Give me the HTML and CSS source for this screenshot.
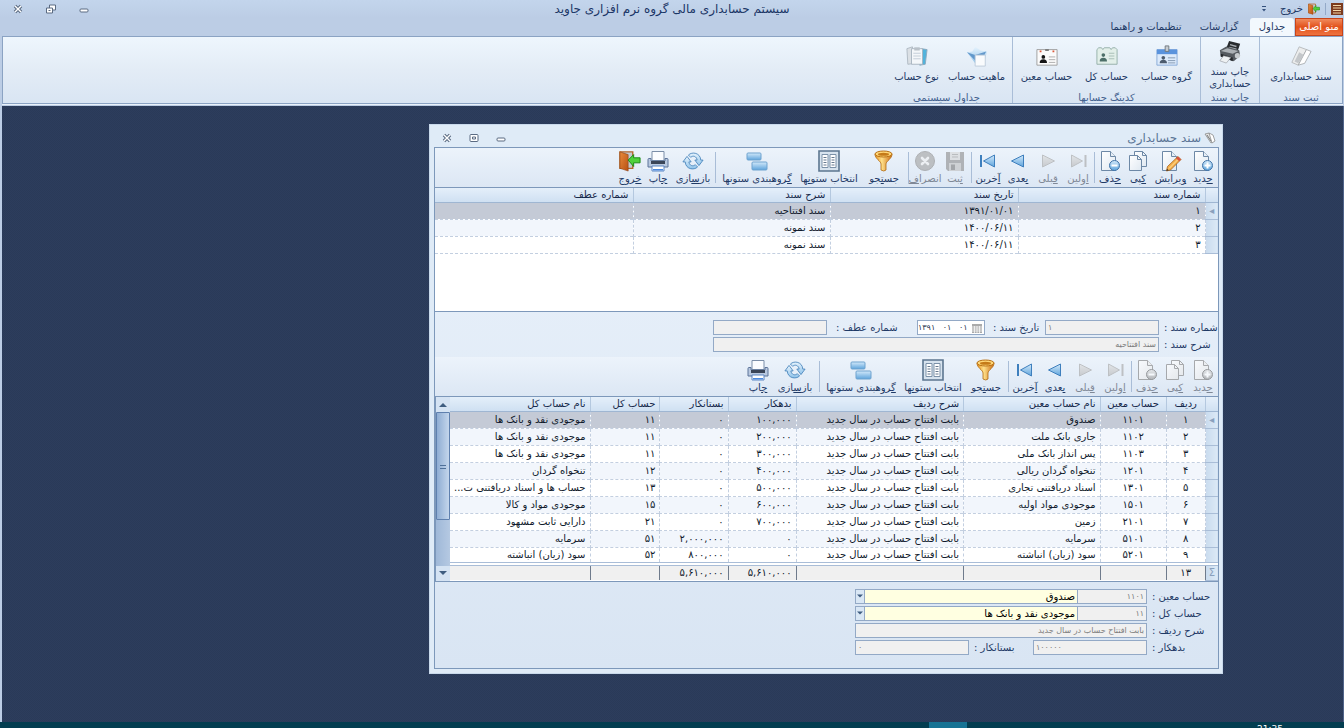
FILE: index.html
```html
<!DOCTYPE html>
<html lang="fa" dir="rtl">
<head>
<meta charset="utf-8">
<title>سیستم حسابداری مالی گروه نرم افزاری جاوید</title>
<link rel="stylesheet" href="styles.css">
</head>
<body>
<svg class="sprite" aria-hidden="true">
  <defs>
    <linearGradient id="blue" x1="0" y1="0" x2="0" y2="1"><stop offset="0" stop-color="#d3e9fa"/><stop offset="1" stop-color="#5ea4dc"/></linearGradient>
    <linearGradient id="pale" x1="0" y1="0" x2="0" y2="1"><stop offset="0" stop-color="#e6f3fd"/><stop offset="1" stop-color="#8fc3ea"/></linearGradient>
    <linearGradient id="grey" x1="0" y1="0" x2="0" y2="1"><stop offset="0" stop-color="#dcdfe2"/><stop offset="1" stop-color="#b4b8bc"/></linearGradient>
    <linearGradient id="gold" x1="0" y1="0" x2="1" y2="0"><stop offset="0" stop-color="#e8911c"/><stop offset=".4" stop-color="#ffe08a"/><stop offset="1" stop-color="#c96a10"/></linearGradient>
    <linearGradient id="door" x1="0" y1="0" x2="1" y2="1"><stop offset="0" stop-color="#e88a3c"/><stop offset="1" stop-color="#b85012"/></linearGradient>
    <linearGradient id="paper" x1="0" y1="0" x2="1" y2="1"><stop offset="0" stop-color="#ffffff"/><stop offset="1" stop-color="#dfe8f1"/></linearGradient>
    <symbol id="i-new" viewBox="0 0 22 22"><path d="M2.500 1.500h9l5 5v14h-14z" fill="url(#paper)" stroke="#6d88a6"/><path d="M11.500 1.500v5h5" fill="#e6eef6" stroke="#6d88a6"/><circle cx="15.500" cy="15.500" r="5" fill="url(#blue)" stroke="#3f73a8"/><path d="M15.500 12.500v6M12.500 15.500h6" stroke="#fff" stroke-width="2"/></symbol>
    <symbol id="i-edit" viewBox="0 0 22 22"><path d="M2.500 1.500h9l5 5v14h-14z" fill="url(#paper)" stroke="#6d88a6"/><path d="M11.500 1.500v5h5" fill="#e6eef6" stroke="#6d88a6"/><path d="M6.500 21l1-4.500L18 6.500l3 3L10.500 20z" fill="#f5b04a" stroke="#a55f1d" stroke-width=".8"/><path d="M9 18.500L19.500 8" stroke="#ffe0a0"/><path d="M18 6.500l3 3-1.800 1.800-3.200-3z" fill="#d8503f"/><path d="M6.500 21l.5-2.200 1.700 1.500z" fill="#333"/></symbol>
    <symbol id="i-copy" viewBox="0 0 22 22"><path d="M7.500 1.500h8l4 4v11h-12z" fill="url(#paper)" stroke="#6d88a6"/><path d="M2.500 5.500h8l4 4v11h-12z" fill="url(#paper)" stroke="#6d88a6"/><path d="M10.500 5.500v4h4M15.500 1.500v4h4" fill="none" stroke="#6d88a6"/></symbol>
    <symbol id="i-delete" viewBox="0 0 22 22"><path d="M2.500 1.500h9l5 5v14h-14z" fill="url(#paper)" stroke="#6d88a6"/><path d="M11.500 1.500v5h5" fill="#e6eef6" stroke="#6d88a6"/><circle cx="15.500" cy="15.500" r="5" fill="url(#blue)" stroke="#3f73a8"/><path d="M12.500 15.500h6" stroke="#fff" stroke-width="2"/></symbol>
    <symbol id="i-first" viewBox="0 0 22 22"><path d="M4.500 5l11 6-11 6z" fill="url(#grey)" stroke="#a4a9ae"/><path d="M18.500 5v12" stroke="#a4a9ae" stroke-width="2"/></symbol>
    <symbol id="i-prev" viewBox="0 0 22 22"><path d="M5.500 5l12 6-12 6z" fill="url(#grey)" stroke="#a4a9ae"/></symbol>
    <symbol id="i-next" viewBox="0 0 22 22"><path d="M16.500 5l-12 6 12 6z" fill="url(#blue)" stroke="#3e7fbd"/></symbol>
    <symbol id="i-last" viewBox="0 0 22 22"><path d="M17.500 5l-11 6 11 6z" fill="url(#blue)" stroke="#3e7fbd"/><path d="M4 5v12" stroke="#3e7fbd" stroke-width="2"/></symbol>
    <symbol id="i-save" viewBox="0 0 22 22"><path d="M2 2h18v19H4l-2-2z" fill="#8f9499"/><path d="M6 2h10v8H6z" fill="#d4d7d9"/><path d="M8 4.500h6M8 7h6" stroke="#9da1a5"/><path d="M5 13h12v8H5z" fill="#bfc3c6"/><path d="M7 14.500h4V20H7z" fill="#7c8186"/></symbol>
    <symbol id="i-cancel" viewBox="0 0 22 22"><circle cx="11" cy="11" r="9.500" fill="#a3a7aa" stroke="#8b8f92"/><path d="M8 8l6 6M14 8l-6 6" stroke="#f0f0f0" stroke-width="2.600" stroke-linecap="round"/></symbol>
    <symbol id="i-filter" viewBox="0 0 22 22"><path d="M2 4c0 5 6 7 6 10v6q3 2 5 0v-6c0-3 6-5 6-10z" fill="url(#gold)" stroke="#b06a12" stroke-width=".8"/><ellipse cx="10.500" cy="4" rx="8.500" ry="3" fill="#ffd777" stroke="#b97014"/><ellipse cx="10.500" cy="4.300" rx="5.500" ry="1.500" fill="#c57a18"/></symbol>
    <symbol id="i-columns" viewBox="0 0 22 22"><path d="M1 1h20v20H1z" fill="#d7e3ee" stroke="#5c7690" stroke-width="1.600"/><path d="M4 4.500h6v13H4zM12 4.500h6v13h-6z" fill="#fff" stroke="#7b91a8"/><path d="M5.500 7.500h3m-3 2.500h3m-3 2.500h3m-3 2.500h3m5-7.500h3m-3 2.500h3m-3 2.500h3m-3 2.500h3" stroke="#66798e"/></symbol>
    <symbol id="i-group" viewBox="0 0 22 22"><rect x="1" y="3" width="14" height="7" rx="1" fill="url(#blue)" stroke="#6fa3cf"/><rect x="6" y="12" width="15" height="8" rx="1" fill="url(#blue)" stroke="#6fa3cf"/></symbol>
    <symbol id="i-refresh" viewBox="0 0 24 22"><path d="M7 4.500C11 .5 20 2 20.500 10H23l-4.500 6L14 10h2.500C16 6 12 4.500 9.500 7z" fill="url(#pale)" stroke="#4280b8" stroke-width=".9"/><path d="M17 17.500C13 21.500 4 20 3.500 12H1l4.500-6L10 12H7.500c.5 4 4.500 5.500 7 3z" fill="url(#pale)" stroke="#4280b8" stroke-width=".9"/></symbol>
    <symbol id="i-print" viewBox="0 0 22 22"><path d="M5 1.500h12v9H5z" fill="#fafcff" stroke="#7b8ea8"/><path d="M1 9.500q0-1 1-1h2V11h14V8.500h2q1 0 1 1V17H1z" fill="#b9c9e0" stroke="#5d749a"/><path d="M4 11h14v3H4z" fill="#3a4558"/><path d="M5 16h12v5H5z" fill="#fff" stroke="#5c87c4"/><path d="M6 19h10v1.500H6z" fill="#4c8ae0"/></symbol>
    <symbol id="i-exit" viewBox="0 0 24 22"><path d="M1 1h14v18H1z" fill="#c4c9ce" stroke="#b3662c" stroke-width="1.500"/><path d="M1 1l9 3v18l-9-3z" fill="url(#door)" stroke="#8a3f10" stroke-width=".6"/><path d="M10 10l6-6v3.500h7v5.500h-7V17z" fill="#4fd13c" stroke="#16850f"/></symbol>
    <symbol id="i-doc" viewBox="0 0 24 24"><path d="M10 2l8 3-9 17-7-3z" fill="#eceded" stroke="#a9acae" stroke-width=".8"/><path d="M18 5l5 2-7 13-7 2z" fill="#fff" stroke="#999da1" stroke-width=".8"/><path d="M10 8l-5 10 4 2 6-9z" fill="#c4c7ca"/></symbol>
    <symbol id="i-doc-small" viewBox="0 0 12 12"><path d="M1 2l4-1 5 8-3 2z" fill="#e4e4e2" stroke="#8a8c8c" stroke-width=".8"/><path d="M5 1l4 2 2 6-3 2z" fill="#fff" stroke="#8a8c8c" stroke-width=".8"/><path d="M3 3l4 6" stroke="#77797a"/></symbol>
    <symbol id="i-printer" viewBox="0 0 26 26"><path d="M9 9l3-8 12 3-3 9z" fill="#282b2e"/><path d="M13 5l7 2M12 8l8 2" stroke="#a6abb0" stroke-width="1.500"/><path d="M2 11l7-4 14 4 1 6-7 6-14-5z" fill="#565b60"/><path d="M3 12l7-3 12 3-6 3z" fill="#abb0b4"/><path d="M3 15l13 4v4L3 18z" fill="#26292c"/><path d="M6 17l8 2-5 6-7-2.500z" fill="#eef1f3" stroke="#888d92" stroke-width=".6"/><circle cx="21" cy="17" r="2.800" fill="#c7cbce"/></symbol>
    <symbol id="i-card-group" viewBox="0 0 24 24"><path d="M1 5h22v17H1z" fill="#dceafb" stroke="#86a8d6"/><path d="M1 5h22v5H1z" fill="#5a93dd"/><path d="M10 1h4v6h-4z" fill="#c6ccd2" stroke="#70777d"/><circle cx="8" cy="14" r="2" fill="#4c5b6d"/><path d="M4 20q0-4 4-4t4 4z" fill="#4c5b6d"/><path d="M13 14h8M13 17h8M13 19.500h8" stroke="#8095ae"/></symbol>
    <symbol id="i-card-total" viewBox="0 0 24 24"><path d="M3 3h3l1.500 2L9 3h6l1.500 2L18 3h3l2 2v16H1V5z" fill="#e2efe9" stroke="#93aea6"/><circle cx="8" cy="11" r="2" fill="#4d6f68"/><path d="M4 18q0-4 4-4t4 4z" fill="#4d6f68"/><path d="M14 9h6M14 12h6M14 15h6" stroke="#a4bcb4"/></symbol>
    <symbol id="i-card-detail" viewBox="0 0 24 24"><path d="M1 5h22v17H1z" fill="#fbfbfb" stroke="#9d9d9d"/><path d="M4 7h2M18 7h2" stroke="#d9593b" stroke-width="2"/><path d="M10 5.500h4" stroke="#777" stroke-width="2"/><circle cx="8" cy="13" r="2" fill="#151515"/><path d="M4 19.500q0-4 4-4t4 4z" fill="#151515"/><path d="M14 13h7M14 16h7M14 19h7" stroke="#aaa"/></symbol>
    <symbol id="i-nature" viewBox="0 0 24 24"><path d="M1 8l6-1 3-5 6 4 7 1-3 11-10 2z" fill="url(#pale)"/><path d="M1 8l9 3 12-4-4 8-8 2z" fill="#4482bd" opacity=".75"/><path d="M10 11h11v12H10z" fill="#f9fbfd" stroke="#bccbda"/></symbol>
    <symbol id="i-type" viewBox="0 0 24 24"><path d="M1 4l6-2 3 18-8 1z" fill="#dbe0e5" stroke="#aeb8c2"/><path d="M17 4l6 1-2 16-6 1z" fill="#51b3dc" stroke="#8ba9bd"/><path d="M6 4h12v17H6z" fill="#f4f7fa" stroke="#a7b4c0"/><path d="M9 2.500h6V6H9z" fill="#b9c1c9"/><path d="M8 9h8M8 12h8M8 15h8" stroke="#c1cbd5"/></symbol>
    <symbol id="i-close" viewBox="0 0 10 10"><path d="M2 2l6 6M8 2l-6 6" stroke="#5b6b82" stroke-width="3.400"/><path d="M2 2l6 6M8 2l-6 6" stroke="#fff" stroke-width="1.400"/></symbol>
    <symbol id="i-restore" viewBox="0 0 10 10"><path d="M3.500 1h6v5h-6z" fill="#fff" stroke="#5b6b82"/><path d="M.5 4h6v5h-6z" fill="#fff" stroke="#5b6b82"/><path d="M2.500 6.500h2" stroke="#5b6b82"/></symbol>
    <symbol id="i-max" viewBox="0 0 10 10"><rect x="1" y="1.500" width="8" height="7" rx="1" fill="#fff" stroke="#5b6b82"/><path d="M3.500 4h3v2h-3z" fill="none" stroke="#5b6b82"/></symbol>
    <symbol id="i-min" viewBox="0 0 10 10"><rect x="1" y="5" width="8" height="3" rx="1" fill="#fff" stroke="#5b6b82"/></symbol>
    <symbol id="i-down" viewBox="0 0 8 8"><path d="M0 2h8L4 6z" fill="#3f5d80"/></symbol>
    <symbol id="i-up" viewBox="0 0 8 8"><path d="M0 6h8L4 2z" fill="#3f5d80"/></symbol>
  </defs>
</svg>

<div class="app">
  <header class="titlebar">
    <div class="quick">
      <svg class="ic12" viewBox="0 0 12 12"><path d="M0 0h12v12H0z" fill="#7c3b1f"/><path d="M2 2.500h8M2 5h8M2 7.500h8M2 10h8" stroke="#f3d7a6"/></svg>
      <span class="quick-sep"></span>
      <button class="quick-btn"><svg class="ic12"><use href="#i-exit"/></svg>خروج</button>
      <button class="quick-more" aria-label="بیشتر"><svg viewBox="0 0 6 6"><path d="M1 .5h4" stroke="#33507c"/><path d="M1 3h4L3 5.500z" fill="#33507c"/></svg></button>
    </div>
    <h1>سیستم حسابداری مالی گروه نرم افزاری جاوید</h1>
    <div class="caption-buttons">
      <button aria-label="کمینه"><svg><use href="#i-min"/></svg></button>
      <button aria-label="بازگردانی"><svg><use href="#i-restore"/></svg></button>
      <button aria-label="بستن"><svg><use href="#i-close"/></svg></button>
    </div>
  </header>

  <nav class="tabs">
    <button class="tab tab-main">منو اصلی</button>
    <button class="tab tab-active">جداول</button>
    <button class="tab tab-reports">گزارشات</button>
    <button class="tab tab-settings">تنظیمات و راهنما</button>
  </nav>

  <section class="ribbon">
    <div class="group group-register">
      <div class="group-items"><button class="big w80"><svg><use href="#i-doc"/></svg>سند حسابداری</button></div>
      <div class="group-title">ثبت سند</div>
    </div>
    <div class="group group-print">
      <div class="group-items"><button class="big big-two w58"><svg><use href="#i-printer"/></svg>چاپ سند<br>حسابداری</button></div>
      <div class="group-title">چاپ سند</div>
    </div>
    <div class="group group-coding">
      <div class="group-items">
        <button class="big w60"><svg><use href="#i-card-group"/></svg>گروه حساب</button>
        <button class="big w60"><svg><use href="#i-card-total"/></svg>حساب کل</button>
        <button class="big w60"><svg><use href="#i-card-detail"/></svg>حساب معین</button>
      </div>
      <div class="group-title">کدینگ حسابها</div>
    </div>
    <div class="group group-system">
      <div class="group-items">
        <button class="big w60"><svg><use href="#i-nature"/></svg>ماهیت حساب</button>
        <button class="big w60"><svg><use href="#i-type"/></svg>نوع حساب</button>
      </div>
      <div class="group-title">جداول سیستمی</div>
    </div>
  </section>

  <main class="desktop">
    <section class="window">
      <header class="win-title">
        <svg class="ic12"><use href="#i-doc-small"/></svg>
        <h2>سند حسابداری</h2>
        <div class="caption-buttons win-buttons">
          <button aria-label="کمینه"><svg><use href="#i-min"/></svg></button>
          <button aria-label="بیشینه"><svg><use href="#i-max"/></svg></button>
          <button aria-label="بستن"><svg><use href="#i-close"/></svg></button>
        </div>
      </header>
      <div class="win-body">
        <div class="toolbar">
          <button class="tool w28"><svg><use href="#i-new"/></svg><span><u>ج</u>دید</span></button>
          <button class="tool w37"><svg><use href="#i-edit"/></svg><span><u>و</u>یرایش</span></button>
          <button class="tool w28"><svg><use href="#i-copy"/></svg><span><u>ک</u>پی</span></button>
          <button class="tool w28"><svg><use href="#i-delete"/></svg><span><u>ح</u>ذف</span></button>
          <span class="sep"></span>
          <button class="tool w30" disabled><svg><use href="#i-first"/></svg><span><u>ا</u>ولین</span></button>
          <button class="tool w30" disabled><svg><use href="#i-prev"/></svg><span><u>ق</u>بلی</span></button>
          <button class="tool w30"><svg><use href="#i-next"/></svg><span><u>ب</u>عدی</span></button>
          <button class="tool w30"><svg><use href="#i-last"/></svg><span><u>آ</u>خرین</span></button>
          <span class="sep"></span>
          <button class="tool w30" disabled><svg><use href="#i-save"/></svg><span><u>ث</u>بت</span></button>
          <button class="tool w30" disabled><svg><use href="#i-cancel"/></svg><span>انصرا<u>ف</u></span></button>
          <span class="sep"></span>
          <button class="tool w46"><svg><use href="#i-filter"/></svg><span>جس<u>ت</u>جو</span></button>
          <button class="tool w64"><svg><use href="#i-columns"/></svg><span>انتخاب ستو<u>ن</u>ها</span></button>
          <button class="tool w80"><svg><use href="#i-group"/></svg><span><u>گ</u>روهبندی ستونها</span></button>
          <span class="sep"></span>
          <button class="tool w42"><svg><use href="#i-refresh"/></svg><span>باز<u>س</u>ازی</span></button>
          <button class="tool w28"><svg><use href="#i-print"/></svg><span><u>چ</u>اپ</span></button>
          <button class="tool w28"><svg><use href="#i-exit"/></svg><span><u>خ</u>روج</span></button>
        </div>

        <div class="grid grid-docs">
          <table>
            <colgroup><col class="c-ind"><col class="c-num"><col class="c-date"><col class="c-desc"><col></colgroup>
            <thead><tr><th></th><th>شماره سند</th><th>تاریخ سند</th><th>شرح سند</th><th>شماره عطف</th></tr></thead>
            <tbody>
              <tr class="selected"><td class="ind">◂</td><td>۱</td><td>۱۳۹۱/۰۱/۰۱</td><td>سند افتتاحیه</td><td></td></tr>
              <tr><td class="ind"></td><td>۲</td><td>۱۴۰۰/۰۶/۱۱</td><td>سند نمونه</td><td></td></tr>
              <tr><td class="ind"></td><td>۳</td><td>۱۴۰۰/۰۶/۱۱</td><td>سند نمونه</td><td></td></tr>
            </tbody>
          </table>
        </div>

        <form class="form form-doc">
          <div class="row">
            <label class="l54" for="docno">شماره سند :</label><input class="f114 at-end" id="docno" value="۱" readonly>
            <label class="l60" for="docdate">تاریخ سند :</label>
            <span class="date"><svg viewBox="0 0 10 10"><path d="M0 1h10v9H0z" fill="#aaa"/><path d="M0 4h10M0 6h10M0 8h10M2.500 3v7M5 3v7M7.500 3v7" stroke="#fff" stroke-width=".7"/></svg><input id="docdate" dir="ltr" value="۱۳۹۱&nbsp;&nbsp; ۰۱&nbsp;&nbsp; ۰۱"></span>
            <label class="l90" for="ref">شماره عطف :</label><input class="f114" id="ref" readonly>
          </div>
          <div class="row">
            <label class="l54" for="docdesc">شرح سند :</label><input class="f446" id="docdesc" value="سند افتتاحیه" readonly>
          </div>
        </form>

        <div class="toolbar">
          <button class="tool w28" disabled><svg><use href="#i-new"/></svg><span><u>ج</u>دید</span></button>
          <button class="tool w28" disabled><svg><use href="#i-copy"/></svg><span><u>ک</u>پی</span></button>
          <button class="tool w28" disabled><svg><use href="#i-delete"/></svg><span><u>ح</u>ذف</span></button>
          <span class="sep"></span>
          <button class="tool w30" disabled><svg><use href="#i-first"/></svg><span><u>ا</u>ولین</span></button>
          <button class="tool w30" disabled><svg><use href="#i-prev"/></svg><span><u>ق</u>بلی</span></button>
          <button class="tool w30"><svg><use href="#i-next"/></svg><span><u>ب</u>عدی</span></button>
          <button class="tool w30"><svg><use href="#i-last"/></svg><span><u>آ</u>خرین</span></button>
          <span class="sep"></span>
          <button class="tool w42"><svg><use href="#i-filter"/></svg><span>جس<u>ت</u>جو</span></button>
          <button class="tool w64"><svg><use href="#i-columns"/></svg><span>انتخاب ستو<u>ن</u>ها</span></button>
          <button class="tool w80"><svg><use href="#i-group"/></svg><span><u>گ</u>روهبندی ستونها</span></button>
          <span class="sep"></span>
          <button class="tool w46"><svg><use href="#i-refresh"/></svg><span>باز<u>س</u>ازی</span></button>
          <button class="tool w28"><svg><use href="#i-print"/></svg><span><u>چ</u>اپ</span></button>
        </div>

        <div class="grid grid-rows">
          <table>
            <colgroup><col class="c-ind"><col class="c-row"><col class="c-code"><col class="c-name"><col class="c-rowdesc"><col class="c-amt"><col class="c-amt"><col class="c-total"><col></colgroup>
            <thead><tr><th></th><th class="mid">ردیف</th><th class="mid">حساب معین</th><th>نام حساب معین</th><th>شرح ردیف</th><th>بدهکار</th><th>بستانکار</th><th>حساب کل</th><th>نام حساب کل</th></tr></thead>
            <tbody>
              <tr class="selected"><td class="ind">◂</td><td class="mid">۱</td><td class="mid">۱۱۰۱</td><td>صندوق</td><td>بابت افتتاح حساب در سال جدید</td><td>۱۰۰,۰۰۰</td><td>۰</td><td>۱۱</td><td>موجودی نقد و بانک ها</td></tr>
              <tr><td class="ind"></td><td class="mid">۲</td><td class="mid">۱۱۰۲</td><td>جاری بانک ملت</td><td>بابت افتتاح حساب در سال جدید</td><td>۲۰۰,۰۰۰</td><td>۰</td><td>۱۱</td><td>موجودی نقد و بانک ها</td></tr>
              <tr><td class="ind"></td><td class="mid">۳</td><td class="mid">۱۱۰۳</td><td>پس انداز بانک ملی</td><td>بابت افتتاح حساب در سال جدید</td><td>۳۰۰,۰۰۰</td><td>۰</td><td>۱۱</td><td>موجودی نقد و بانک ها</td></tr>
              <tr><td class="ind"></td><td class="mid">۴</td><td class="mid">۱۲۰۱</td><td>تنخواه گردان ریالی</td><td>بابت افتتاح حساب در سال جدید</td><td>۴۰۰,۰۰۰</td><td>۰</td><td>۱۲</td><td>تنخواه گردان</td></tr>
              <tr><td class="ind"></td><td class="mid">۵</td><td class="mid">۱۳۰۱</td><td>اسناد دریافتنی تجاری</td><td>بابت افتتاح حساب در سال جدید</td><td>۵۰۰,۰۰۰</td><td>۰</td><td>۱۳</td><td>حساب ها و اسناد دریافتنی ت...</td></tr>
              <tr><td class="ind"></td><td class="mid">۶</td><td class="mid">۱۵۰۱</td><td>موجودی مواد اولیه</td><td>بابت افتتاح حساب در سال جدید</td><td>۶۰۰,۰۰۰</td><td>۰</td><td>۱۵</td><td>موجودی مواد و کالا</td></tr>
              <tr><td class="ind"></td><td class="mid">۷</td><td class="mid">۲۱۰۱</td><td>زمین</td><td>بابت افتتاح حساب در سال جدید</td><td>۷۰۰,۰۰۰</td><td>۰</td><td>۲۱</td><td>دارایی ثابت مشهود</td></tr>
              <tr><td class="ind"></td><td class="mid">۸</td><td class="mid">۵۱۰۱</td><td>سرمایه</td><td>بابت افتتاح حساب در سال جدید</td><td>۰</td><td>۲,۰۰۰,۰۰۰</td><td>۵۱</td><td>سرمایه</td></tr>
              <tr><td class="ind"></td><td class="mid">۹</td><td class="mid">۵۲۰۱</td><td>سود (زیان) انباشته</td><td>بابت افتتاح حساب در سال جدید</td><td>۰</td><td>۸۰۰,۰۰۰</td><td>۵۲</td><td>سود (زیان) انباشته</td></tr>
            </tbody>
            <tfoot><tr><td class="ind">Σ</td><td class="mid">۱۳</td><td></td><td></td><td></td><td>۵,۶۱۰,۰۰۰</td><td>۵,۶۱۰,۰۰۰</td><td></td><td></td></tr></tfoot>
          </table>
          <div class="scroll">
            <button aria-label="بالا"><svg><use href="#i-up"/></svg></button>
            <div class="thumb"></div>
            <button class="scroll-down" aria-label="پایین"><svg><use href="#i-down"/></svg></button>
          </div>
        </div>

        <form class="form form-row">
          <div class="row">
            <label class="l66" for="code1">حساب معین :</label><input class="f70" id="code1" value="۱۱۰۱" readonly>
            <span class="combo"><select aria-label="نام حساب معین"><option>صندوق</option></select><svg><use href="#i-down"/></svg></span>
          </div>
          <div class="row">
            <label class="l66" for="code2">حساب کل :</label><input class="f70" id="code2" value="۱۱" readonly>
            <span class="combo"><select aria-label="نام حساب کل"><option>موجودی نقد و بانک ها</option></select><svg><use href="#i-down"/></svg></span>
          </div>
          <div class="row">
            <label class="l66" for="rowdesc">شرح ردیف :</label><input class="f292" id="rowdesc" value="بابت افتتاح حساب در سال جدید" readonly>
          </div>
          <div class="row">
            <label class="l66" for="debit">بدهکار :</label><input class="f114 at-end" id="debit" value="۱۰۰۰۰۰" readonly>
            <label class="l64" for="credit">بستانکار :</label><input class="f114 at-end" id="credit" value="۰" readonly>
          </div>
        </form>
      </div>
    </section>
  </main>

  <footer class="taskbar" dir="ltr"><span class="task-active"></span><span class="clock">21:35</span></footer>
</div>
</body>
</html>
```
FILE: styles.css
```css
* { box-sizing: border-box; }
body { margin: 0; font: 11px/14px "DejaVu Sans", sans-serif; color: #1f3a66; }
button, input, select { font: inherit; color: inherit; margin: 0; padding: 0; border: 0; background: none; }
button { white-space: nowrap; }
.sprite { position: absolute; width: 0; height: 0; }
.app { display: flex; flex-direction: column; height: 100vh; overflow: hidden; background: #bccde5; }
.ic12 { width: 12px; height: 12px; flex: none; }

.titlebar { display: grid; grid-template-columns: 1fr auto 1fr; align-items: center; height: 18px; background: linear-gradient(#c3d5ec, #bccde5); flex: none; }
.titlebar h1 { margin: 0; font-size: 12px; line-height: 16px; font-weight: 400; color: #1b3666; }
.quick { display: flex; align-items: center; gap: 5px; padding-right: 1px; }
.quick-sep { width: 1px; height: 12px; background: #93a9c8; }
.quick-btn { display: flex; align-items: center; gap: 5px; font-size: 10px; }
.quick-more { width: 8px; height: 10px; margin-right: 8px; }
.quick-more svg { width: 6px; height: 6px; display: block; }
.caption-buttons { display: flex; justify-content: flex-end; gap: 23px; padding-left: 13px; }
.caption-buttons button { width: 10px; height: 10px; }
.caption-buttons svg { display: block; width: 10px; height: 10px; }

.tabs { display: flex; align-items: stretch; height: 18px; padding-right: 1px; font-size: 10px; flex: none; }
.tab { text-align: center; }
.tab-main { width: 48px; background: linear-gradient(#f08a5c, #e2511b 50%, #ee7440); border: 1px solid #c8441a; color: #fff; }
.tab-active { width: 44px; background: #f2f8fd; border-radius: 3px 3px 0 0; margin-right: 1px; }
.tab-reports { width: 62px; }
.tab-settings { width: 84px; }

.ribbon { display: flex; height: 68px; margin: 0 1px 2px 2px; flex: none; background: linear-gradient(#eef6fd, #e3ecf6 50%, #d9e5f3); border: 1px solid #8ba3c3; box-shadow: 0 1px #eaf2fb; }
.group { display: flex; flex-direction: column; border-left: 1px solid #a9bdd7; }
.group-register { width: 83px; }
.group-print { width: 59px; }
.group-coding { width: 188px; }
.group-system { width: 131px; border-left: 0; }
.group-items { display: flex; justify-content: center; flex: 1; }
.group-title { height: 12px; line-height: 14px; font-size: 10px; text-align: center; overflow: hidden; color: #44628f; }
.big { display: flex; flex-direction: column; align-items: center; padding-top: 8px; font-size: 10px; line-height: 12px; gap: 4px; }
.big svg { width: 22px; height: 22px; flex: none; }
.big-two { display: block; padding-top: 1px; text-align: center; }
.big-two svg { width: 24px; height: 24px; display: block; margin: 0 auto 2px; }
.w28 { width: 28px; }
.w30 { width: 30px; }
.w37 { width: 37px; }
.w42 { width: 42px; }
.w46 { width: 46px; }
.w58 { width: 58px; }
.w60 { width: 60px; }
.w64 { width: 64px; }
.w80 { width: 80px; }

.desktop { position: relative; flex: 1; overflow: hidden; margin-left: 2px; background: repeating-conic-gradient(#2d3d5d 0 25%, #2a3a58 0 50%) 0 0 / 2px 2px; border-right: 1px solid #52658a; }
.window { position: absolute; top: 18px; right: 120px; width: 794px; padding: 0 3px 4px 4px; background: #dfebf7; border: 1px solid #c9d9eb; }
.win-title { display: flex; align-items: center; height: 22px; padding-top: 4px; padding-right: 3px; gap: 3px; }
.win-title h2 { flex: 1; margin: 0; font-size: 12px; line-height: 16px; font-weight: 400; color: #5b7596; }
.win-buttons { gap: 17px; padding-left: 8px; }
.win-body { border: 1px solid #7d98ba; background: linear-gradient(#eaf2fb, #d9e5f3); }

.toolbar { display: flex; align-items: stretch; height: 40px; padding-right: 1px; background: linear-gradient(#ecf3fb, #dce7f4); border-bottom: 1px solid #7d98ba; }
.tool { display: flex; flex-direction: column; align-items: center; padding-top: 2px; font-size: 10px; line-height: 14px; }
.tool svg { width: 22px; height: 22px; flex: none; }
.tool:disabled { color: #7f8896; }
.tool:disabled svg { filter: grayscale(1); opacity: .65; }
.sep { width: 1px; margin: 4px 1px; background: #a9bdd7; }

.grid { display: flex; background: #fff; color: #101a2c; }
.grid table { flex: 1; min-width: 0; table-layout: fixed; border-collapse: collapse; font-size: 10px; line-height: 12px; }
.grid-docs { min-height: 124px; align-items: flex-start; border-bottom: 1px solid #7d98ba; }
th { height: 14px; padding: 0 4px; font-weight: 400; text-align: right; color: #15284a; background: linear-gradient(#e4effa, #cfe0f2); border-left: 1px solid #b4c8df; border-bottom: 1px solid #9fb6d2; white-space: nowrap; }
td { height: 17px; padding: 0 4px; text-align: right; white-space: nowrap; overflow: hidden; border-left: 1px dashed #c3cfe0; border-bottom: 1px dashed #c3cfe0; }
tbody tr:nth-child(even) { background: #f2f6fc; }
tbody tr.selected { background: #c4cad6; }
th:last-child, td:last-child { border-left: 0; }
.grid .mid { text-align: center; padding: 0; }
.grid .ind { padding: 0; text-align: center; color: #8aa0bd; background: linear-gradient(to left, #dce9f6, #c9dbee); border-bottom: 1px solid #a9bdd7; }
.c-ind { width: 13px; }
.c-num { width: 187px; }
.c-date { width: 188px; }
.c-desc { width: 197px; }
.c-row { width: 40px; }
.c-code { width: 67px; }
.c-name { width: 139px; }
.c-rowdesc { width: 169px; }
.c-amt { width: 69px; }
.c-total { width: 71px; }
.grid-rows { border-bottom: 1px solid #7d98ba; }
tfoot td { height: 16px; background: #f0f0f0; border-left: 1px solid #6f7b8c; border-top: 4px double #a9bdd7; border-bottom: 0; }
.scroll { display: flex; flex-direction: column; width: 15px; background: linear-gradient(to left, #b5c9e2, #9fb8d8); border-left: 1px solid #7d98ba; }
.scroll button { height: 15px; background: #d5e3f3; }
.scroll svg { display: block; width: 8px; height: 8px; margin: 0 auto; }
.thumb { height: 108px; border: 1px solid #5f80ae; border-radius: 1px; background: linear-gradient(#4f7099, #4f7099) center 52px / 6px 1px no-repeat, linear-gradient(#4f7099, #4f7099) center 55px / 6px 1px no-repeat, linear-gradient(to left, #c4d6ec, #8fadd3); }
.scroll-down { margin-top: auto; }

.form { display: flex; flex-direction: column; gap: 2px; overflow: hidden; }
.form-doc { height: 45px; padding-top: 8px; }
.form-row { height: 86px; padding-top: 7px; }
.row { display: flex; height: 15px; }
.row label { flex: none; text-align: left; white-space: nowrap; font-size: 10px; line-height: 16px; }
.row label:first-child { margin-left: 5px; }
.row input { height: 15px; padding: 0 2px; font-size: 8px; color: #7c7c7c; background: #f0f0f0; border: 1px solid #93a9c6; }
.row .at-end { text-align: left; }
.l54 { width: 54px; }
.l60 { width: 60px; padding-left: 8px; }
.l64 { width: 64px; padding-left: 5px; }
.l66 { width: 66px; }
.l90 { width: 90px; padding-left: 9px; }
.f70 { width: 70px; }
.f114 { width: 114px; }
.f292 { width: 292px; }
.f446 { width: 446px; }
.date { display: flex; align-items: center; width: 68px; background: #fff; border: 1px solid #93a9c6; }
.date svg { width: 10px; height: 10px; margin: 0 2px; flex: none; }
.row .date input { flex: 1; min-width: 0; height: 13px; padding: 0; background: #fff; border: 0; color: #26344c; }
.combo { display: flex; align-items: center; width: 222px; background: #d9e7f5; border: 1px solid #93a9c6; border-right: 0; }
.combo select { flex: 1; height: 13px; appearance: none; padding: 0 2px; font-size: 10px; line-height: 13px; color: #000; background: #ffffe1; border-left: 1px solid #93a9c6; }
.combo svg { width: 6px; height: 6px; margin: 0 1px; }

.taskbar { display: flex; height: 6px; overflow: hidden; flex: none; background: #033d50; }
.task-active { width: 38px; margin-left: 929px; background: #177394; }
.clock { margin-left: auto; margin-right: 61px; padding-top: 2px; font-size: 9px; line-height: 10px; color: #fff; }
```
